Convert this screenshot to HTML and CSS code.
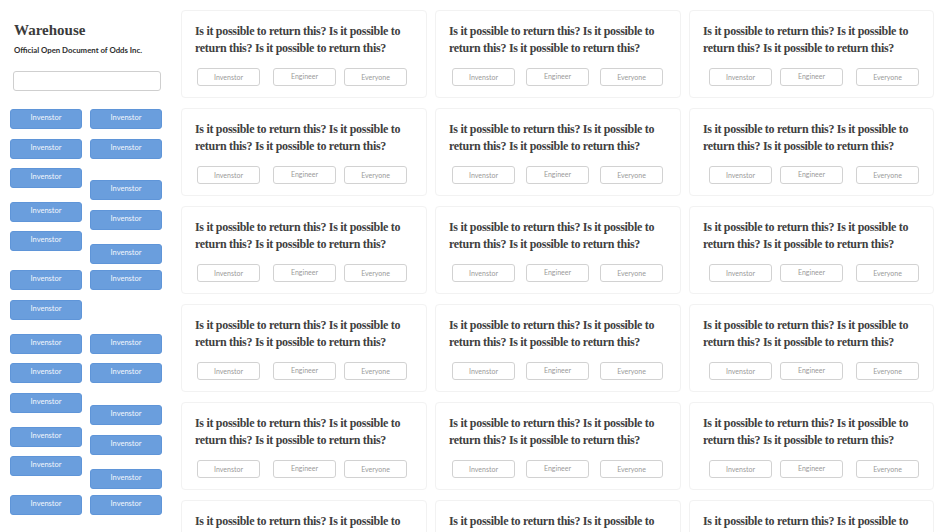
FILE: index.html
```html
<!DOCTYPE html>
<html>
<head>
<meta charset="utf-8">
<link rel="stylesheet" href="styles.css">
</head>
<body>
<div class="page">
  <aside class="sidebar">
    <div class="brand">
      <h1 class="title">Warehouse</h1>
      <p class="sub">Official Open Document of Odds Inc.</p>
    </div>
    <input class="search" type="text">
    <div class="btn-cols">
      <div class="btn-col">
        <div class="sbtn">Invenstor</div>
        <div class="sbtn m10">Invenstor</div>
        <div class="sbtn m9">Invenstor</div>
        <div class="sbtn m14">Invenstor</div>
        <div class="sbtn m9">Invenstor</div>
        <div class="sbtn m19">Invenstor</div>
        <div class="sbtn m10">Invenstor</div>
        <div class="sbtn m14">Invenstor</div>
        <div class="sbtn m9">Invenstor</div>
        <div class="sbtn m10">Invenstor</div>
        <div class="sbtn m14">Invenstor</div>
        <div class="sbtn m9">Invenstor</div>
        <div class="sbtn m19">Invenstor</div>
      </div>
      <div class="btn-col">
        <div class="sbtn">Invenstor</div>
        <div class="sbtn m10">Invenstor</div>
        <div class="sbtn m21">Invenstor</div>
        <div class="sbtn m10">Invenstor</div>
        <div class="sbtn m14">Invenstor</div>
        <div class="sbtn m6">Invenstor</div>
        <div class="sbtn m44">Invenstor</div>
        <div class="sbtn m9">Invenstor</div>
        <div class="sbtn m22">Invenstor</div>
        <div class="sbtn m10">Invenstor</div>
        <div class="sbtn m14">Invenstor</div>
        <div class="sbtn m6">Invenstor</div>
      </div>
    </div>
  </aside>
  <main class="grid">
    <div class="card c1"><p class="q">Is it possible to return this? Is it possible to return this? Is it possible to return this?</p><div class="opts"><span class="opt">Invenstor</span><span class="opt up">Engineer</span><span class="opt">Everyone</span></div></div>
    <div class="card c2"><p class="q">Is it possible to return this? Is it possible to return this? Is it possible to return this?</p><div class="opts"><span class="opt">Invenstor</span><span class="opt up">Engineer</span><span class="opt">Everyone</span></div></div>
    <div class="card c3"><p class="q">Is it possible to return this? Is it possible to return this? Is it possible to return this?</p><div class="opts"><span class="opt">Invenstor</span><span class="opt up">Engineer</span><span class="opt">Everyone</span></div></div>

    <div class="card c1"><p class="q">Is it possible to return this? Is it possible to return this? Is it possible to return this?</p><div class="opts"><span class="opt">Invenstor</span><span class="opt up">Engineer</span><span class="opt">Everyone</span></div></div>
    <div class="card c2"><p class="q">Is it possible to return this? Is it possible to return this? Is it possible to return this?</p><div class="opts"><span class="opt">Invenstor</span><span class="opt up">Engineer</span><span class="opt">Everyone</span></div></div>
    <div class="card c3"><p class="q">Is it possible to return this? Is it possible to return this? Is it possible to return this?</p><div class="opts"><span class="opt">Invenstor</span><span class="opt up">Engineer</span><span class="opt">Everyone</span></div></div>

    <div class="card c1"><p class="q">Is it possible to return this? Is it possible to return this? Is it possible to return this?</p><div class="opts"><span class="opt">Invenstor</span><span class="opt up">Engineer</span><span class="opt">Everyone</span></div></div>
    <div class="card c2"><p class="q">Is it possible to return this? Is it possible to return this? Is it possible to return this?</p><div class="opts"><span class="opt">Invenstor</span><span class="opt up">Engineer</span><span class="opt">Everyone</span></div></div>
    <div class="card c3"><p class="q">Is it possible to return this? Is it possible to return this? Is it possible to return this?</p><div class="opts"><span class="opt">Invenstor</span><span class="opt up">Engineer</span><span class="opt">Everyone</span></div></div>

    <div class="card c1"><p class="q">Is it possible to return this? Is it possible to return this? Is it possible to return this?</p><div class="opts"><span class="opt">Invenstor</span><span class="opt up">Engineer</span><span class="opt">Everyone</span></div></div>
    <div class="card c2"><p class="q">Is it possible to return this? Is it possible to return this? Is it possible to return this?</p><div class="opts"><span class="opt">Invenstor</span><span class="opt up">Engineer</span><span class="opt">Everyone</span></div></div>
    <div class="card c3"><p class="q">Is it possible to return this? Is it possible to return this? Is it possible to return this?</p><div class="opts"><span class="opt">Invenstor</span><span class="opt up">Engineer</span><span class="opt">Everyone</span></div></div>

    <div class="card c1"><p class="q">Is it possible to return this? Is it possible to return this? Is it possible to return this?</p><div class="opts"><span class="opt">Invenstor</span><span class="opt up">Engineer</span><span class="opt">Everyone</span></div></div>
    <div class="card c2"><p class="q">Is it possible to return this? Is it possible to return this? Is it possible to return this?</p><div class="opts"><span class="opt">Invenstor</span><span class="opt up">Engineer</span><span class="opt">Everyone</span></div></div>
    <div class="card c3"><p class="q">Is it possible to return this? Is it possible to return this? Is it possible to return this?</p><div class="opts"><span class="opt">Invenstor</span><span class="opt up">Engineer</span><span class="opt">Everyone</span></div></div>

    <div class="card c1"><p class="q">Is it possible to return this? Is it possible to return this? Is it possible to return this?</p><div class="opts"><span class="opt">Invenstor</span><span class="opt up">Engineer</span><span class="opt">Everyone</span></div></div>
    <div class="card c2"><p class="q">Is it possible to return this? Is it possible to return this? Is it possible to return this?</p><div class="opts"><span class="opt">Invenstor</span><span class="opt up">Engineer</span><span class="opt">Everyone</span></div></div>
    <div class="card c3"><p class="q">Is it possible to return this? Is it possible to return this? Is it possible to return this?</p><div class="opts"><span class="opt">Invenstor</span><span class="opt up">Engineer</span><span class="opt">Everyone</span></div></div>
  </main>
</div>
</body>
</html>
```
FILE: styles.css
```css
html, body {
  margin: 0;
  padding: 0;
  background: #ffffff;
}
.page {
  display: flex;
  height: 100vh;
  overflow: hidden;
}
.sidebar {
  width: 181px;
  flex: none;
}
.brand {
  padding: 21px 0 0 14px;
}
.title {
  margin: 0;
  font: bold 15px/18px "Liberation Serif", serif;
  color: #3b3b3b;
}
.sub {
  margin: 6px 0 0;
  font: bold 7.8px/10px Lato, "Open Sans", sans-serif;
  color: #2e2e2e;
}
.search {
  display: block;
  box-sizing: border-box;
  margin: 16px 0 0 13px;
  width: 148px;
  height: 20px;
  border: 1px solid #cfcfcf;
  border-radius: 3px;
  background: #fff;
  outline: none;
  padding: 0 4px;
}
.btn-cols {
  display: flex;
  gap: 8px;
  margin-top: 18px;
  padding-left: 10px;
}
.btn-col {
  width: 72px;
  display: flex;
  flex-direction: column;
}
.sbtn {
  box-sizing: border-box;
  height: 20px;
  padding-bottom: 3px;
  display: flex;
  align-items: center;
  justify-content: center;
  background: #6a9edd;
  border: 1px solid #5f95d8;
  border-radius: 3px;
  color: #f2f6fc;
  font: 7.5px Lato, "Open Sans", sans-serif;
}
.m6 { margin-top: 6px; }
.m9 { margin-top: 9px; }
.m10 { margin-top: 10px; }
.m14 { margin-top: 14px; }
.m19 { margin-top: 19px; }
.m21 { margin-top: 21px; }
.m22 { margin-top: 22px; }
.m44 { margin-top: 44px; }

.grid {
  display: grid;
  grid-template-columns: 246px 246px 245px;
  column-gap: 8px;
  row-gap: 10px;
  padding-top: 10px;
  align-content: start;
}
.card {
  border: 1px solid #f2f2f2;
  border-radius: 4px;
  padding: 12px 13px 11px;
  background: #fff;
}
.q {
  margin: 0;
  font: bold 12px/17px "Liberation Serif", serif;
  letter-spacing: -0.3px;
  color: #3f3f3f;
}
.opts {
  display: flex;
  margin-top: 11px;
}
.opt {
  box-sizing: border-box;
  width: 63px;
  height: 18px;
  display: flex;
  align-items: center;
  justify-content: center;
  border: 1px solid #d2d2d2;
  border-radius: 3px;
  font: 7px Lato, "Open Sans", sans-serif;
  color: #9a9a9a;
}
.opt.up {
  padding-bottom: 3px;
}
.c1 .opt:nth-child(1) { margin-left: 2px; }
.c1 .opt:nth-child(2) { margin-left: 13px; }
.c1 .opt:nth-child(3) { margin-left: 8px; }
.c2 .opt:nth-child(1) { margin-left: 3px; }
.c2 .opt:nth-child(2) { margin-left: 11px; }
.c2 .opt:nth-child(3) { margin-left: 11px; }
.c3 .opt:nth-child(1) { margin-left: 6px; }
.c3 .opt:nth-child(2) { margin-left: 8px; }
.c3 .opt:nth-child(3) { margin-left: 13px; }
```
